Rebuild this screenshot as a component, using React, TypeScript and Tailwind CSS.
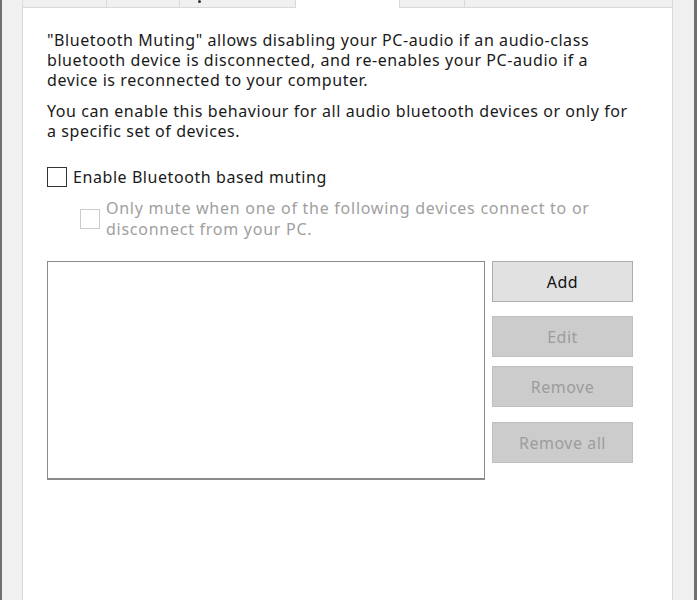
import React from "react";

const font = { fontFamily: '"Noto Sans", "Open Sans", sans-serif' };

function Btn({ label, disabled }: { label: string; disabled?: boolean }) {
  return (
    <div
      className={
        "h-[41px] w-[141px] flex items-center justify-center border text-[16px] tracking-[0.5px] " +
        (disabled
          ? "bg-[#cccccc] border-[#bfbfbf] text-[#9c9c9c]"
          : "bg-[#e1e1e1] border-[#adadad] text-[#111111]")
      }
    >
      {label}
    </div>
  );
}

export default function App() {
  return (
    <div
      className="w-[697px] h-[600px] bg-[#f0f0f0] flex overflow-hidden text-[#1a1a1a]"
      style={font}
    >
      <div className="w-[2px] shrink-0 bg-[#6f6f6f]" />
      <div className="w-[20px] shrink-0" />
      <div className="w-[651px] flex flex-col shrink-0">
        {/* tabs strip */}
        <div className="h-[8px] flex items-stretch shrink-0">
          <div className="w-[85px] bg-[#f0f0f0] border-l border-r border-b border-[#d9d9d9]" />
          <div className="w-[73px] bg-[#f0f0f0] border-r border-b border-[#d9d9d9]" />
          <div className="w-[116px] bg-[#f0f0f0] border-r border-b border-[#d9d9d9] pl-[18px]">
            <div className="w-[3px] h-[3px] bg-[#333333] rounded-full" />
          </div>
          <div className="w-[104px] bg-white border-r border-[#d9d9d9]" />
          <div className="w-[65px] bg-[#f0f0f0] border-r border-b border-[#d9d9d9]" />
          <div className="flex-1 border-b border-r border-[#d9d9d9]" />
        </div>
        {/* panel */}
        <div className="flex-1 bg-white border-l border-r border-[#d9d9d9] pl-[24px] pt-[22px] text-[16px] leading-[20px] tracking-[0.57px]">
          <p className="w-[620px]">
            "Bluetooth Muting" allows disabling your PC-audio if an audio-class
            <br />
            bluetooth device is disconnected, and re-enables your PC-audio if a
            <br />
            device is reconnected to your computer.
          </p>
          <p className="mt-[11px] w-[620px]">
            You can enable this behaviour for all audio bluetooth devices or only for
            <br />
            a specific set of devices.
          </p>
          <div className="mt-[26px] flex items-center gap-[6px] h-[20px]">
            <div className="w-[20px] h-[20px] border border-[#333333] bg-white" />
            <span>Enable Bluetooth based muting</span>
          </div>
          <div className="mt-[11px] ml-[33px] flex items-center gap-[6px]">
            <div className="w-[20px] h-[20px] border border-[#cccccc] bg-white shrink-0" />
            <span className="leading-[21px] text-[#a0a0a0] tracking-[0.74px]">
              Only mute when one of the following devices connect to or
              <br />
              disconnect from your PC.
            </span>
          </div>
          <div className="mt-[21px] flex gap-[7px]">
            <div className="w-[438px] h-[219px] border border-[#8a8a8a] border-b-2 bg-white" />
            <div className="flex flex-col">
              <Btn label="Add" />
              <div className="h-[14px]" />
              <Btn label="Edit" disabled />
              <div className="h-[9px]" />
              <Btn label="Remove" disabled />
              <div className="h-[15px]" />
              <Btn label="Remove all" disabled />
            </div>
          </div>
        </div>
      </div>
      <div className="flex-1" />
      <div className="w-[3px] shrink-0 bg-[#6f6f6f]" />
    </div>
  );
}
